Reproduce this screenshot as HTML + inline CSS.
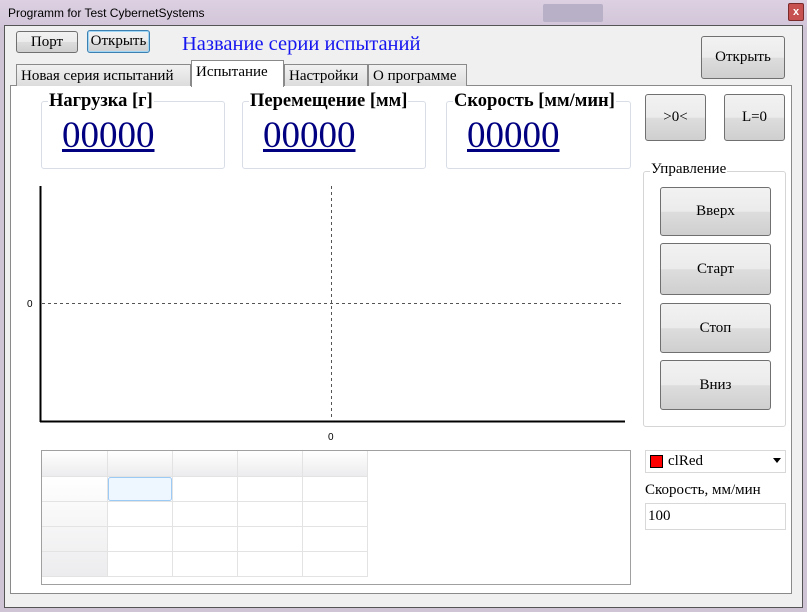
<!DOCTYPE html><html><head><meta charset="utf-8"><style>
*{box-sizing:border-box;margin:0;padding:0}
body{width:807px;height:612px;background:#cfc3d6;position:relative;overflow:hidden;font-family:"Liberation Serif",serif;color:#000}
.a{position:absolute}
.btn{position:absolute;border:1px solid #707070;border-radius:3px;background:linear-gradient(#f2f2f2,#ebebeb 50%,#dddddd 51%,#cfcfcf);display:flex;align-items:center;justify-content:center;font-size:15px}
.gb{position:absolute;border:1px solid #d8dde6;border-radius:3px}
.gt{position:absolute;top:-11px;left:6px;background:#fff;font-weight:bold;font-size:18.5px;padding:0 1px;white-space:nowrap}
.num{position:absolute;left:20px;top:12px;font-size:37px;color:#000080;text-decoration:underline}
.tab{position:absolute;top:64px;height:22px;border:1px solid #8a8a8a;border-bottom:none;background:linear-gradient(#f2f2f2,#dcdcdc);font-size:15px;padding:3px 4px 0;white-space:nowrap}
</style></head><body>
<div class="a" style="left:0;top:0;width:807px;height:27px;background:linear-gradient(#dcd0e2,#d2c5d9)"></div>
<div class="a" style="left:8px;top:6px;font-family:'Liberation Sans',sans-serif;font-size:12px">Programm for Test CybernetSystems</div>
<div class="a" style="left:543px;top:4px;width:60px;height:18px;background:#b7b0c6;border-radius:2px"></div>
<div class="a" style="left:788px;top:3px;width:16px;height:18px;background:#c75050;border:1px solid #7a2a2a;border-radius:2px;color:#fff;font:bold 11px 'Liberation Sans',sans-serif;text-align:center;line-height:16px">x</div>
<div class="a" style="left:4px;top:25px;width:799px;height:583px;background:#f0f0f0;border:1px solid #555"></div>
<div class="btn" style="left:16px;top:31px;width:62px;height:22px">Порт</div>
<div class="btn" style="left:87px;top:30px;width:63px;height:23px;border-color:#3c7fb1;box-shadow:inset 0 0 0 1px #9fd6f5">Открыть</div>
<div class="a" style="left:182px;top:33px;font-size:20.5px;color:#1515f0">Название серии испытаний</div>
<div class="btn" style="left:701px;top:36px;width:84px;height:43px">Открыть</div>
<div class="a" style="left:10px;top:85px;width:782px;height:509px;background:#fff;border:1px solid #8a8a8a"></div>
<div class="tab" style="left:16px;width:175px">Новая серия испытаний</div>
<div class="tab" style="left:284px;width:84px">Настройки</div>
<div class="tab" style="left:368px;width:99px">О программе</div>
<div class="tab" style="left:191px;top:60px;height:27px;width:93px;background:#fff">Испытание</div>
<div class="gb" style="left:41px;top:101px;width:184px;height:68px"><div class="gt">Нагрузка [г]</div><div class="num">00000</div></div>
<div class="gb" style="left:242px;top:101px;width:184px;height:68px"><div class="gt">Перемещение [мм]</div><div class="num">00000</div></div>
<div class="gb" style="left:446px;top:101px;width:185px;height:68px"><div class="gt">Скорость [мм/мин]</div><div class="num">00000</div></div>
<div class="btn" style="left:645px;top:94px;width:61px;height:47px">&gt;0&lt;</div>
<div class="btn" style="left:724px;top:94px;width:61px;height:47px">L=0</div>
<svg class="a" style="left:0;top:0" width="807" height="612">
<line x1="40.5" y1="186" x2="40.5" y2="422" stroke="#000" stroke-width="2"/>
<line x1="40" y1="421.5" x2="625" y2="421.5" stroke="#000" stroke-width="2"/>
<line x1="331.5" y1="186" x2="331.5" y2="420" stroke="#555" stroke-dasharray="3,3"/>
<line x1="42" y1="303.5" x2="622" y2="303.5" stroke="#555" stroke-dasharray="3,3"/>
<text x="27" y="307" font-family="Liberation Sans" font-size="10">0</text>
<text x="328" y="440" font-family="Liberation Sans" font-size="10">0</text>
</svg>
<div class="gb" style="left:643px;top:171px;width:143px;height:256px;border-color:#d5d5d5"><div class="gt" style="font-weight:normal;font-size:15px;left:6px">Управление</div></div>
<div class="btn" style="left:660px;top:187px;width:111px;height:49px">Вверх</div>
<div class="btn" style="left:660px;top:243px;width:111px;height:52px">Старт</div>
<div class="btn" style="left:660px;top:303px;width:111px;height:50px">Стоп</div>
<div class="btn" style="left:660px;top:360px;width:111px;height:50px">Вниз</div>
<div class="a" style="left:41px;top:450px;width:590px;height:135px;border:1px solid #a0a0a0"></div>
<svg class="a" style="left:0;top:0" width="807" height="612">
<defs><linearGradient id="h" x1="0" y1="0" x2="0" y2="1"><stop offset="0" stop-color="#fff"/><stop offset="1" stop-color="#ececee"/></linearGradient></defs>
<rect x="42" y="451" width="326" height="25" fill="url(#h)"/>
<rect x="42" y="476" width="66" height="101" fill="url(#h)"/>
<g stroke="#e3e3e3"><line x1="107.5" y1="451" x2="107.5" y2="577"/><line x1="172.5" y1="451" x2="172.5" y2="577"/><line x1="237.5" y1="451" x2="237.5" y2="577"/><line x1="302.5" y1="451" x2="302.5" y2="577"/><line x1="367.5" y1="451" x2="367.5" y2="577"/>
<line x1="42" y1="476.5" x2="368" y2="476.5"/><line x1="42" y1="501.5" x2="368" y2="501.5"/><line x1="42" y1="526.5" x2="368" y2="526.5"/><line x1="42" y1="551.5" x2="368" y2="551.5"/><line x1="42" y1="576.5" x2="368" y2="576.5"/></g>
<rect x="108.5" y="477.5" width="63" height="23" rx="2" fill="#eef6ff" stroke="#9ccaf5"/>
</svg>
<div class="a" style="left:645px;top:450px;width:141px;height:23px;border:1px solid #d8d8d8;font-size:15px;padding:2px 0 0 22px">clRed</div>
<div class="a" style="left:650px;top:455px;width:13px;height:13px;background:#f00;border:1px solid #000"></div>
<div class="a" style="left:773px;top:458px;border:4px solid transparent;border-top:5px solid #000"></div>
<div class="a" style="left:645px;top:482px;font-size:15px">Скорость, мм/мин</div>
<div class="a" style="left:645px;top:503px;width:141px;height:27px;border:1px solid #d8d8d8;font-size:15px;padding:4px 2px">100</div>
</body></html>
